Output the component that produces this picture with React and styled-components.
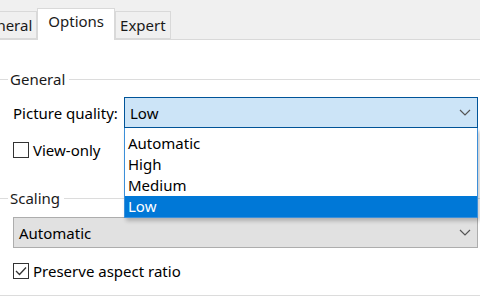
import React from 'react';
import styled, { createGlobalStyle } from 'styled-components';

const GlobalStyle = createGlobalStyle`
  html, body {
    margin: 0;
    padding: 0;
    background: #ffffff;
    overflow: hidden;
  }
  body {
    font-family: "Noto Sans", "Open Sans", sans-serif;
    font-size: 15px;
    color: #000000;
  }
`;

const Window = styled.div`
  width: 480px;
  height: 300px;
  display: flex;
  flex-direction: column;
  background: #ffffff;
  position: relative;
  overflow: hidden;
`;

const TabStrip = styled.div`
  height: 40px;
  flex-shrink: 0;
  background: #f0f0f0;
  border-bottom: 1px solid #d9d9d9;
  box-sizing: border-box;
  display: flex;
  align-items: flex-end;
`;

const Tab = styled.div`
  box-sizing: border-box;
  height: ${p => (p.$active ? '32px' : '28px')};
  margin-bottom: ${p => (p.$active ? '-1px' : '0')};
  padding: 0 ${p => (p.$active ? '10px' : '4px')};
  padding-top: ${p => (p.$active ? '2px' : '0')};
  margin-left: ${p => p.$shift || '0'};
  background: ${p => (p.$active ? '#ffffff' : '#f0f0f0')};
  border: 1px solid #d9d9d9;
  border-bottom: ${p => (p.$active ? 'none' : '1px solid #d9d9d9')};
  display: flex;
  align-items: ${p => (p.$active ? 'flex-start' : 'center')};
  font-size: 15px;
  color: #1a1a1a;
  white-space: nowrap;
  position: relative;
  z-index: ${p => (p.$active ? 1 : 0)};
`;

const Body = styled.div`
  flex: 1;
  display: flex;
  flex-direction: column;
  padding-top: 28px;
  position: relative;
`;

const GroupTitle = styled.div`
  display: flex;
  align-items: center;
  height: 22px;
  margin-top: ${p => p.$space || '0'};
  font-size: 15px;
  color: #1a1a1a;
  &::before {
    content: '';
    width: 8px;
    height: 1px;
    background: #dcdcdc;
    margin-right: 2px;
  }
  &::after {
    content: '';
    flex: 1;
    height: 1px;
    background: #dcdcdc;
    margin-left: 4px;
  }
`;

const GroupBody = styled.div`
  display: flex;
  flex-direction: column;
  padding: ${p => p.$pad || '0'};
  gap: ${p => p.$gap || '0'};
`;

const Row = styled.div`
  display: flex;
  align-items: center;
  position: relative;
`;

const FieldLabel = styled.span`
  width: 111px;
  flex-shrink: 0;
  font-size: 15px;
  white-space: nowrap;
`;

const ComboWrap = styled.div`
  flex: 1;
  position: relative;
`;

const Combo = styled.div`
  box-sizing: border-box;
  height: 31px;
  display: flex;
  align-items: center;
  justify-content: space-between;
  padding: 0 6px 0 5px;
  background: ${p => (p.$open ? '#cce4f7' : '#e1e1e1')};
  border: 1px solid ${p => (p.$open ? '#005499' : '#adadad')};
  font-size: 15px;
`;

const Chevron = () => (
  <svg width="12" height="7" viewBox="0 0 12 7">
    <path d="M1 1 L6 6 L11 1" fill="none" stroke="#555" strokeWidth="1.2" />
  </svg>
);

const DropList = styled.ul`
  position: absolute;
  top: 31px;
  left: 0;
  right: 0;
  margin: 0;
  padding: 5px 0 0 0;
  list-style: none;
  box-sizing: border-box;
  background: #ffffff;
  border: 1px solid #3c8fd9;
  border-top: none;
  box-shadow: 2px 3px 4px rgba(0, 0, 0, 0.22);
  z-index: 5;
`;

const Option = styled.li`
  height: 21px;
  line-height: 21px;
  padding-left: 3px;
  font-size: 15px;
  background: ${p => (p.$selected ? '#0078d7' : 'transparent')};
  color: ${p => (p.$selected ? '#ffffff' : '#000000')};
`;

const CheckRow = styled.label`
  display: flex;
  align-items: center;
  gap: 4px;
  font-size: 15px;
`;

const Box = styled.span`
  box-sizing: border-box;
  width: 16px;
  height: 16px;
  border: 1px solid #333333;
  background: #ffffff;
  display: flex;
  align-items: center;
  justify-content: center;
`;

const Check = () => (
  <svg width="12" height="10" viewBox="0 0 12 10">
    <path d="M1 5 L4.5 8.5 L11 1.5" fill="none" stroke="#333" strokeWidth="1.3" />
  </svg>
);

const BottomRule = styled.div`
  margin-top: auto;
  margin-bottom: 4px;
  height: 1px;
  background: #dcdcdc;
`;

const options = ['Automatic', 'High', 'Medium', 'Low'];

export default function App() {
  return (
    <>
      <GlobalStyle />
      <Window>
        <TabStrip>
          <Tab $shift="-28px">General</Tab>
          <Tab $active>Options</Tab>
          <Tab>Expert</Tab>
        </TabStrip>
        <Body>
          <GroupTitle>General</GroupTitle>
          <GroupBody $pad="7px 2px 0 13px" $gap="12px">
            <Row>
              <FieldLabel>Picture quality:</FieldLabel>
              <ComboWrap>
                <Combo $open>
                  <span>Low</span>
                  <Chevron />
                </Combo>
                <DropList>
                  {options.map(o => (
                    <Option key={o} $selected={o === 'Low'}>{o}</Option>
                  ))}
                </DropList>
              </ComboWrap>
            </Row>
            <CheckRow>
              <Box />
              View-only
            </CheckRow>
          </GroupBody>
          <GroupTitle $space="27px">Scaling</GroupTitle>
          <GroupBody $pad="8px 2px 0 13px" $gap="13px">
            <Combo>
              <span>Automatic</span>
              <Chevron />
            </Combo>
            <CheckRow>
              <Box><Check /></Box>
              Preserve aspect ratio
            </CheckRow>
          </GroupBody>
          <BottomRule />
        </Body>
      </Window>
    </>
  );
}
